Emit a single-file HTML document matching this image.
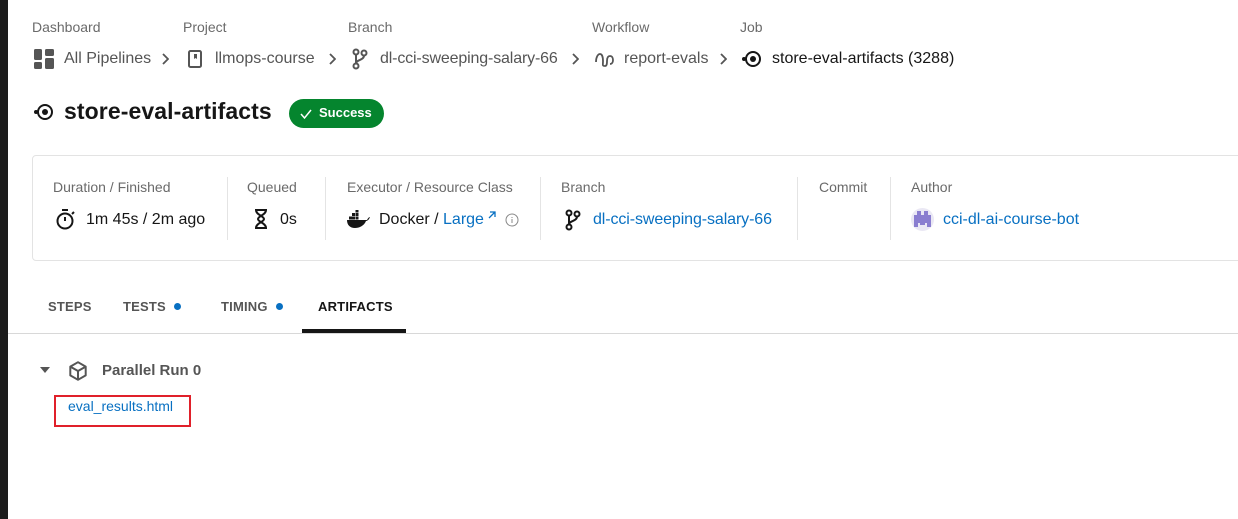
<!DOCTYPE html>
<html><head><meta charset="utf-8"><style>
*{box-sizing:border-box;margin:0;padding:0}
body{width:1238px;height:519px;background:#fff;font-family:"Liberation Sans",sans-serif;position:relative;overflow:hidden;color:#161616}
.a{position:absolute;white-space:nowrap}
.lbl{font-size:14px;color:#6a6a6a}
.bc{font-size:16px;color:#555}
.val{font-size:16px;color:#161616}
.lnk{color:#0870c2}
svg{position:absolute}
.sep{position:absolute;top:177px;width:1px;height:63px;background:#e4e4e4}
.tab{position:absolute;top:299px;font-size:13px;font-weight:bold;color:#555;letter-spacing:.2px}
.dot{display:inline-block;width:7px;height:7px;border-radius:50%;background:#0870c2;margin-left:8px;vertical-align:1px}
</style></head><body>
<div class="a" style="left:0;top:0;width:8px;height:519px;background:#1c1c1c"></div>

<div class="a lbl" style="left:32px;top:19px">Dashboard</div>
<div class="a lbl" style="left:183px;top:19px">Project</div>
<div class="a lbl" style="left:348px;top:19px">Branch</div>
<div class="a lbl" style="left:592px;top:19px">Workflow</div>
<div class="a lbl" style="left:740px;top:19px">Job</div>

<svg style="left:34px;top:49px" width="20" height="20" viewBox="0 0 20 20" fill="#555"><rect x="0" y="0" width="8" height="11" rx="1.5"/><rect x="11" y="0" width="9" height="7" rx="1.5"/><rect x="0" y="13" width="8" height="7" rx="1.5"/><rect x="11" y="9" width="9" height="11" rx="1.5"/></svg>
<div class="a bc" style="left:64px;top:50px">All Pipelines</div>
<svg style="left:161px;top:53px" width="8" height="12" viewBox="0 0 8 12" fill="none" stroke="#555" stroke-width="1.8"><path d="M2 1l5 5-5 5"/></svg>
<svg style="left:187px;top:49px" width="16" height="20" viewBox="0 0 16 20" fill="none" stroke="#555" stroke-width="2"><rect x="2" y="2" width="12" height="16" rx="1.5"/><path d="M7 5v5l1.5-1 1.5 1V5z" fill="#555" stroke="none"/></svg>
<div class="a bc" style="left:215px;top:50px">llmops-course</div>
<svg style="left:328px;top:53px" width="8" height="12" viewBox="0 0 8 12" fill="none" stroke="#555" stroke-width="1.8"><path d="M2 1l5 5-5 5"/></svg>
<svg style="left:351px;top:48px" width="18" height="22" viewBox="0 0 18 22" fill="none" stroke="#555" stroke-width="2"><circle cx="5" cy="4" r="2.5"/><circle cx="5" cy="18" r="2.5"/><circle cx="13" cy="5" r="2.5"/><path d="M5 6.5v9M13 7.5c0 5-8 4-8 8"/></svg>
<div class="a bc" style="left:380px;top:50px;letter-spacing:-.15px">dl-cci-sweeping-salary-66</div>
<svg style="left:571px;top:53px" width="8" height="12" viewBox="0 0 8 12" fill="none" stroke="#555" stroke-width="1.8"><path d="M2 1l5 5-5 5"/></svg>
<svg style="left:594px;top:50px" width="22" height="18" viewBox="0 0 22 18" fill="none" stroke="#555" stroke-width="1.8"><path d="M2 12c0-5 2-8 4-8s3 3 3 7-1 5 2 5c2 0 2-3 2-5 0-3 1-5 3-5s3 2 3 4-1 4-3 4"/></svg>
<div class="a bc" style="left:624px;top:50px">report-evals</div>
<svg style="left:719px;top:53px" width="8" height="12" viewBox="0 0 8 12" fill="none" stroke="#555" stroke-width="1.8"><path d="M2 1l5 5-5 5"/></svg>
<svg style="left:742px;top:50px" width="20" height="18" viewBox="0 0 20 18"><circle cx="2" cy="9" r="2" fill="#161616"/><circle cx="11" cy="9" r="7" fill="none" stroke="#161616" stroke-width="2"/><circle cx="11" cy="9" r="3" fill="#161616"/></svg>
<div class="a val" style="left:772px;top:50px">store-eval-artifacts (3288)</div>

<svg style="left:34px;top:103px" width="20" height="18" viewBox="0 0 20 18"><circle cx="2" cy="9" r="2" fill="#161616"/><circle cx="11" cy="9" r="7" fill="none" stroke="#161616" stroke-width="2"/><circle cx="11" cy="9" r="3" fill="#161616"/></svg>
<div class="a" style="left:64px;top:98px;font-size:23px;font-weight:bold;letter-spacing:.1px">store-eval-artifacts</div>
<div class="a" style="left:289px;top:99px;width:95px;height:29px;border-radius:15px;background:#05852e;color:#fff;font-size:13px;font-weight:bold;padding-left:30px;line-height:28px">Success</div>
<svg style="left:299px;top:107px" width="14" height="14" viewBox="0 0 14 14" fill="none" stroke="#fff" stroke-width="1.5"><path d="M2 7l3.5 4L12 3"/></svg>

<div class="a" style="left:32px;top:155px;width:1220px;height:106px;border:1px solid #e3e3e3;border-radius:4px"></div>
<div class="a lbl" style="left:53px;top:179px">Duration / Finished</div>
<div class="a lbl" style="left:247px;top:179px">Queued</div>
<div class="a lbl" style="left:347px;top:179px">Executor / Resource Class</div>
<div class="a lbl" style="left:561px;top:179px">Branch</div>
<div class="a lbl" style="left:819px;top:179px">Commit</div>
<div class="a lbl" style="left:911px;top:179px">Author</div>
<div class="sep" style="left:227px"></div><div class="sep" style="left:325px"></div><div class="sep" style="left:540px"></div><div class="sep" style="left:797px"></div><div class="sep" style="left:890px"></div>

<svg style="left:54px;top:208px" width="22" height="22" viewBox="0 0 22 22" fill="none" stroke="#161616" stroke-width="2"><circle cx="11" cy="13" r="7.5"/><path d="M8 2h6M11 13V9M18 6l2-2"/></svg>
<div class="a val" style="left:86px;top:211px">1m 45s / 2m ago</div>
<svg style="left:254px;top:208px" width="14" height="22" viewBox="0 0 14 22" fill="none" stroke="#161616" stroke-width="2"><path d="M2 2h10c0 5-8 6-8 9s8 4 8 9H2c0-5 8-6 8-9S2 7 2 2z"/></svg>
<div class="a val" style="left:280px;top:211px">0s</div>
<svg style="left:346px;top:210px" width="24" height="18" viewBox="0 0 24 18" fill="#161616"><rect x="6" y="3" width="3" height="3"/><rect x="9.5" y="3" width="3" height="3"/><rect x="9.5" y="0" width="3" height="2.5"/><rect x="3" y="6.5" width="3" height="3"/><rect x="6" y="6.5" width="3" height="3"/><rect x="9.5" y="6.5" width="3" height="3"/><path d="M1 10h20c1-2 2-3 3-3-1 3-3 4-4 4-2 5-7 7-11 7C4 18 1 15 1 10z"/></svg>
<div class="a val" style="left:379px;top:211px">Docker / <span class="lnk">Large</span></div>
<svg style="left:487px;top:210px" width="10" height="10" viewBox="0 0 10 10" fill="none" stroke="#0870c2" stroke-width="1.3"><path d="M2 8l6-6M3 2h5v5"/></svg>
<svg style="left:505px;top:213px" width="14" height="14" viewBox="0 0 14 14" fill="none" stroke="#888" stroke-width="1"><circle cx="7" cy="7" r="6"/><path d="M7 6v4M7 4v1"/></svg>
<svg style="left:564px;top:209px" width="18" height="22" viewBox="0 0 18 22" fill="none" stroke="#161616" stroke-width="2"><circle cx="5" cy="4" r="2.5"/><circle cx="5" cy="18" r="2.5"/><circle cx="13" cy="5" r="2.5"/><path d="M5 6.5v9M13 7.5c0 5-8 4-8 8"/></svg>
<div class="a val lnk" style="left:593px;top:211px;letter-spacing:-.1px">dl-cci-sweeping-salary-66</div>
<div class="a" style="left:911px;top:208px;width:23px;height:23px;border-radius:50%;background:#eae8f4"></div>
<svg style="left:913px;top:211px" width="19" height="17" viewBox="0 0 19 17" fill="#8a7ed0"><rect x="4" y="0" width="4" height="4"/><rect x="11" y="0" width="4" height="4"/><rect x="1" y="4" width="17" height="8"/><rect x="1" y="12" width="4" height="4"/><rect x="14" y="12" width="4" height="4"/><rect x="7" y="12" width="5" height="2"/></svg>
<div class="a val lnk" style="left:943px;top:211px">cci-dl-ai-course-bot</div>

<div class="tab" style="left:48px">STEPS</div>
<div class="tab" style="left:123px">TESTS<span class="dot"></span></div>
<div class="tab" style="left:221px">TIMING<span class="dot"></span></div>
<div class="tab" style="left:318px;color:#161616">ARTIFACTS</div>
<div class="a" style="left:302px;top:329px;width:104px;height:4px;background:#161616"></div>
<div class="a" style="left:8px;top:333px;width:1230px;height:1px;background:#d8d8d8"></div>

<svg style="left:40px;top:367px" width="10" height="6" viewBox="0 0 10 6" fill="#555"><path d="M0 0h10L5 6z"/></svg>
<svg style="left:67px;top:360px" width="22" height="22" viewBox="0 0 20 20" fill="none" stroke="#555" stroke-width="1.8" stroke-linejoin="round"><path d="M10 2l7 4v8l-7 4-7-4V6zM3 6l7 4 7-4M10 10v8"/></svg>
<div class="a" style="left:102px;top:362px;font-size:15px;font-weight:bold;color:#555">Parallel Run 0</div>
<div class="a lnk" style="left:68px;top:398px;font-size:14px">eval_results.html</div>
<div class="a" style="left:54px;top:395px;width:137px;height:32px;border:2px solid #e0202a"></div>
</body></html>
